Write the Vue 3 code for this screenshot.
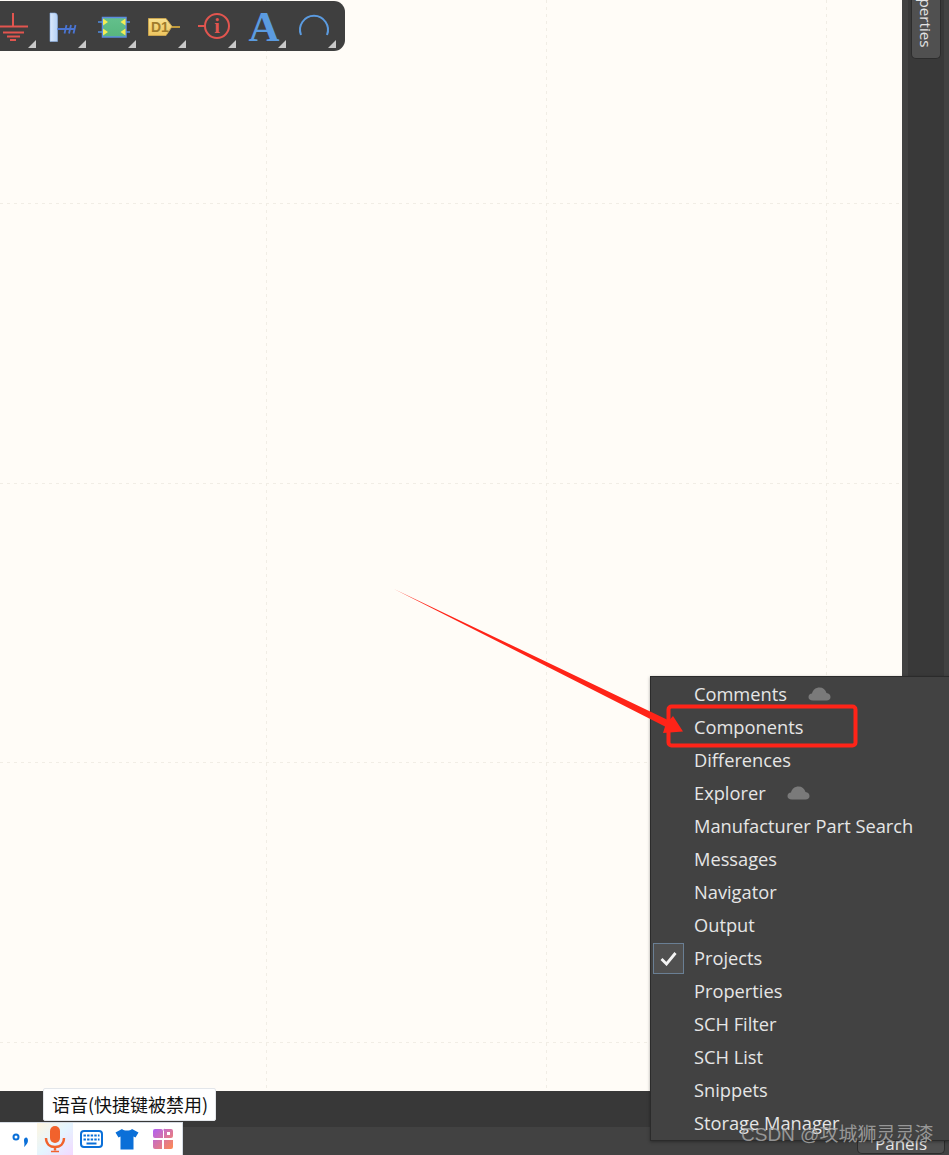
<script setup>
const panels = [
  { name: 'Comments', cloud: 16 },
  { name: 'Components' },
  { name: 'Differences' },
  { name: 'Explorer', cloud: 16 },
  { name: 'Manufacturer Part Search' },
  { name: 'Messages' },
  { name: 'Navigator' },
  { name: 'Output' },
  { name: 'Projects', checked: true },
  { name: 'Properties' },
  { name: 'SCH Filter' },
  { name: 'SCH List' },
  { name: 'Snippets' },
  { name: 'Storage Manager' }
]
</script>

<template>
  <div class="app">
    <div class="main">
      <div class="canvas"></div>
      <aside class="side">
        <div class="strip">
          <div class="tab"><span>Properties</span></div>
        </div>
      </aside>
    </div>
    <div class="status"></div>
    <div class="bottom">
      <button class="panels-btn">Panels</button>
    </div>

    <div class="toolbar">
      <div class="tool">
        <svg width="50" height="50" viewBox="0 0 50 50">
          <path d="M27 12V25M0 25.500H42M17 31.500H38M21 35.500H34M24 39H30" stroke="#e2554f" stroke-width="2" fill="none" />
        </svg>
      </div>
      <div class="tool">
        <svg width="50" height="50" viewBox="0 0 50 50">
          <defs>
            <linearGradient id="port" x1="0" x2="1" y1="0" y2="0">
              <stop offset="0" stop-color="#dbe9fb" />
              <stop offset="1" stop-color="#b4d0f5" />
            </linearGradient>
          </defs>
          <path d="M14 12H19Q21.500 12 21.500 16V40.500H14Z" fill="url(#port)" stroke="#8cb0e6" stroke-width="0.600" />
          <path d="M21.500 28H38" stroke="#4a74d2" stroke-width="2" />
          <path d="M28.500 32.500L30.500 24M33 32.500L35 24M37.500 32.500L39.500 24" stroke="#4a74d2" stroke-width="1.800" />
        </svg>
      </div>
      <div class="tool">
        <svg width="50" height="50" viewBox="0 0 50 50">
          <defs>
            <linearGradient id="chip" x1="0" x2="0" y1="0" y2="1">
              <stop offset="0" stop-color="#63c08c" />
              <stop offset="1" stop-color="#58b67e" />
            </linearGradient>
          </defs>
          <path d="M12 21H22M12 31H22M34 21H44M34 31H44" stroke="#4f8ce0" stroke-width="1.400" />
          <rect x="16.500" y="16.500" width="23.500" height="19.500" fill="url(#chip)" stroke="#5b8ce0" stroke-width="1.500" />
          <path d="M17 17.500L22 21L17 24.500ZM17 27.500L22 31L17 34.500ZM39.500 17.500L34.500 21L39.500 24.500ZM39.500 27.500L34.500 31L39.500 34.500Z" fill="#f5ec55" />
        </svg>
      </div>
      <div class="tool">
        <svg width="50" height="50" viewBox="0 0 50 50">
          <defs>
            <linearGradient id="tag" x1="0" x2="0" y1="0" y2="1">
              <stop offset="0" stop-color="#f7e08f" />
              <stop offset="1" stop-color="#eec55f" />
            </linearGradient>
          </defs>
          <path d="M34 26H44" stroke="#c09a3c" stroke-width="2" />
          <path d="M12.500 17.500H30L36 25.500L30 34.500H12.500Z" fill="url(#tag)" stroke="#c9a44f" />
        </svg>
        <span class="d1">D1</span>
      </div>
      <div class="tool">
        <svg width="50" height="50" viewBox="0 0 50 50">
          <path d="M12 25H19" stroke="#e2554f" stroke-width="2" />
          <circle cx="31" cy="25" r="12" stroke="#e2554f" stroke-width="2" fill="none" />
        </svg>
        <span class="info">i</span>
      </div>
      <div class="tool">
        <span class="big-a">A</span>
      </div>
      <div class="tool">
        <svg width="50" height="50" viewBox="0 0 50 50">
          <path d="M15 34A14 14 0 1 1 41 34" stroke="#5b9be0" stroke-width="2" fill="none" />
        </svg>
      </div>
    </div>

    <svg class="marks" width="949" height="1155" viewBox="0 0 949 1155">
      <path d="M394 589L669 720.500L673 716L683 731.500L663 733L665 726.500Z" fill="#ff2418" />
      <rect x="668.500" y="706.500" width="187" height="39" rx="3" fill="none" stroke="#ff2418" stroke-width="4" />
    </svg>

    <div class="menu">
      <div v-for="p in panels" :key="p.name" class="row">
        <span v-if="p.checked" class="check">
          <svg width="17" height="15" viewBox="0 0 17 15">
            <path d="M1.500 8L6.500 13L15.500 2" stroke="#f4f4f4" stroke-width="2.800" fill="none" />
          </svg>
        </span>
        <span class="label">{{ p.name }}</span>
        <svg v-if="p.cloud" class="cloud" width="23" height="16" viewBox="0 0 23 16">
          <path d="M5 14.500C2 14.500 0.500 13 0.500 11C0.500 9 2 7.500 4 7.500C5 3.500 8 1.500 11.500 1.500C15 1.500 17.500 3.500 18.500 7C21 7.200 22.500 9 22.500 11C22.500 13 21 14.500 18.500 14.500Z" fill="#7a7a7a" />
        </svg>
      </div>
    </div>

    <div class="ime">
      <span class="ime-cell ime-punct">
        <svg width="22" height="22" viewBox="0 0 22 22">
          <circle cx="7" cy="8" r="2.500" stroke="#0a6fd8" stroke-width="2" fill="none" />
          <path d="M18.500 9.500C20 13 17.500 16 15 18C16 15 15 13.500 15 11.500C15 8 18 8 18.500 9.500Z" fill="#0a6fd8" />
        </svg>
      </span>
      <span class="ime-cell ime-mic">
        <svg width="24" height="28" viewBox="0 0 24 28">
          <rect x="7" y="1" width="10" height="17" rx="5" fill="#f1622c" />
          <path d="M3 13C3 19 7 22 12 22C17 22 21 19 21 13M12 22V25.500" stroke="#f1622c" stroke-width="2.400" fill="none" />
          <path d="M8 26.500H16" stroke="#f1622c" stroke-width="1.500" />
        </svg>
      </span>
      <span class="ime-cell">
        <svg width="23" height="18" viewBox="0 0 23 18">
          <rect x="1" y="1" width="21" height="16" rx="3" fill="#fff" stroke="#0a6fd8" stroke-width="2" />
          <path d="M3.500 5.500H19.500M3.500 9.500H19.500" stroke="#0a6fd8" stroke-width="2.200" stroke-dasharray="2.400 1.200" />
          <path d="M6.500 13.500H16.500" stroke="#0a6fd8" stroke-width="2" />
        </svg>
      </span>
      <span class="ime-cell">
        <svg width="24" height="22" viewBox="0 0 24 22">
          <path d="M7 1C9 3 15 3 17 1L23.500 4.500L20.500 9.500L18.500 8.500V21.500H5.500V8.500L3.500 9.500L0.500 4.500Z" fill="#0a6fd8" />
        </svg>
      </span>
      <span class="ime-cell">
        <svg width="22" height="22" viewBox="0 0 22 22">
          <defs>
            <linearGradient id="apps" x1="0" x2="1" y1="0" y2="1">
              <stop offset="0" stop-color="#b060f5" />
              <stop offset="1" stop-color="#ff8a50" />
            </linearGradient>
          </defs>
          <path fill-rule="evenodd" d="M3 1H9A2 2 0 0 1 11 3V10H3A2 2 0 0 1 1 8V3A2 2 0 0 1 3 1ZM13 1H19A2 2 0 0 1 21 3V8A2 2 0 0 1 19 10H12V3A1 1 0 0 1 13 1ZM15 4V7H18V4ZM1 12H10V21H3A2 2 0 0 1 1 19ZM12 12H21V19A2 2 0 0 1 19 21H12Z" fill="url(#apps)" />
        </svg>
      </span>
    </div>

    <div class="tip">语音(快捷键被禁用)</div>
    <div class="watermark">CSDN @攻城狮灵灵漆</div>
  </div>
</template>

<style>
html, body { margin: 0; background: #424242; }
</style>

<style scoped>
.app {
  position: relative;
  width: 949px;
  height: 1155px;
  overflow: hidden;
  display: flex;
  flex-direction: column;
  font-family: "Open Sans", "Noto Sans CJK SC", sans-serif;
}
.main { display: flex; height: 1091px; }
.canvas {
  --dot: #f1ede5;
  flex: 1;
  background-color: #fffcf7;
  background-image:
    linear-gradient(to bottom, var(--dot) 50%, transparent 50%),
    linear-gradient(to bottom, var(--dot) 50%, transparent 50%),
    linear-gradient(to bottom, var(--dot) 50%, transparent 50%),
    linear-gradient(to right, var(--dot) 50%, transparent 50%),
    linear-gradient(to right, var(--dot) 50%, transparent 50%),
    linear-gradient(to right, var(--dot) 50%, transparent 50%),
    linear-gradient(to right, var(--dot) 50%, transparent 50%);
  background-size: 1px 7px, 1px 7px, 1px 7px, 7px 1px, 7px 1px, 7px 1px, 7px 1px;
  background-position: 266px 0, 546px 0, 826px 0, 0 203px, 0 483px, 0 762px, 0 1042px;
  background-repeat: repeat-y, repeat-y, repeat-y, repeat-x, repeat-x, repeat-x, repeat-x;
}
.side {
  width: 47px;
  background: #424242;
  padding: 0 5px 0 6px;
  box-sizing: border-box;
}
.strip {
  height: 100%;
  background: #393939;
  padding-left: 3px;
}
.tab {
  width: 30px;
  height: 59px;
  box-sizing: border-box;
  background: #505050;
  border: 1px solid #2c2c2c;
  border-top: 0;
  border-radius: 0 0 5px 5px;
  display: flex;
  flex-direction: column;
  justify-content: flex-end;
  align-items: center;
  padding-bottom: 10px;
  overflow: hidden;
  color: #e4e4e4;
  font-size: 15.200px;
}
.tab span { writing-mode: vertical-rl; white-space: nowrap; line-height: 24px; }
.status { height: 36px; background: #383838; }
.bottom {
  height: 28px;
  background: #424242;
  display: flex;
  justify-content: flex-end;
  align-items: flex-end;
  padding: 0 4px 1px 0;
  box-sizing: border-box;
}
.panels-btn {
  width: 88px;
  height: 24px;
  box-sizing: border-box;
  background: #505050;
  border: 1px solid #2c2c2c;
  border-top: 0;
  border-radius: 0 0 5px 5px;
  color: #e8e8e8;
  font: 17px/18px "Open Sans", sans-serif;
  padding: 5px 0 0;
}

.toolbar {
  position: absolute;
  left: -14px;
  top: 1px;
  height: 50px;
  display: flex;
  padding-right: 9px;
  background: #3f3f3f;
  border-radius: 0 11px 11px 0;
}
.tool { position: relative; width: 50px; height: 50px; }
.tool svg { display: block; }
.tool::after {
  content: "";
  position: absolute;
  right: 0;
  bottom: 3px;
  width: 0;
  height: 0;
  border-left: 8px solid transparent;
  border-bottom: 8px solid #c9c9c9;
}
.d1 {
  position: absolute;
  left: 15px;
  top: 15px;
  font: bold 14px/22px "Liberation Sans", sans-serif;
  color: #a07c2c;
}
.info {
  position: absolute;
  left: 19px;
  width: 24px;
  top: 12px;
  text-align: center;
  font: bold 20px/26px "Liberation Serif", serif;
  color: #e2554f;
}
.big-a {
  position: absolute;
  left: 10px;
  top: 2px;
  width: 36px;
  text-align: center;
  font: bold 43px/48px "Liberation Serif", serif;
  color: #5b9be0;
}

.marks { position: absolute; left: 0; top: 0; z-index: 3; pointer-events: none; }

.menu {
  position: absolute;
  left: 650px;
  top: 676px;
  width: 299px;
  height: 465px;
  box-sizing: border-box;
  background: #424242;
  border: 1px solid #2b2b2b;
  border-right: 0;
  box-shadow: 0 1px 3px rgba(0, 0, 0, 0.35);
  z-index: 2;
}
.row {
  position: relative;
  height: 33px;
  display: flex;
  align-items: center;
  padding-left: 43px;
  color: #e6e6e6;
  font-size: 18.250px;
}
.label { white-space: nowrap; }
.cloud { margin-left: 21px; }
.check {
  position: absolute;
  left: 2px;
  top: 2px;
  width: 31px;
  height: 31px;
  box-sizing: border-box;
  background: #505050;
  border: 1px solid #6a7f94;
  display: flex;
  align-items: center;
  justify-content: center;
}

.ime {
  position: absolute;
  left: 0;
  top: 1122px;
  width: 183px;
  height: 33px;
  box-sizing: border-box;
  background: #fff;
  border-top: 1px solid #d5dbe3;
  border-right: 1px solid #d5dbe3;
  display: flex;
  padding-left: 2px;
}
.ime-cell {
  width: 36px;
  display: flex;
  align-items: center;
  justify-content: center;
}
.ime-punct { width: 35px; padding-top: 2px; box-sizing: border-box; }
.ime-mic {
  background: linear-gradient(135deg, #fff6e0 0%, #e4f5ff 50%, #f2d9ff 100%);
}

.tip {
  position: absolute;
  left: 43px;
  top: 1088px;
  width: 173px;
  height: 33px;
  box-sizing: border-box;
  background: #fff;
  border: 1px solid #e3e6ea;
  border-radius: 2px;
  color: #111;
  font: 18px/31px "Noto Sans CJK SC", sans-serif;
  padding-left: 8px;
  white-space: nowrap;
}
.watermark {
  position: absolute;
  left: 741px;
  top: 1122px;
  z-index: 4;
  white-space: nowrap;
  color: rgba(175, 175, 175, 0.8);
  font: 19px/26px "Liberation Sans", "Noto Sans CJK SC", sans-serif;
}
</style>
